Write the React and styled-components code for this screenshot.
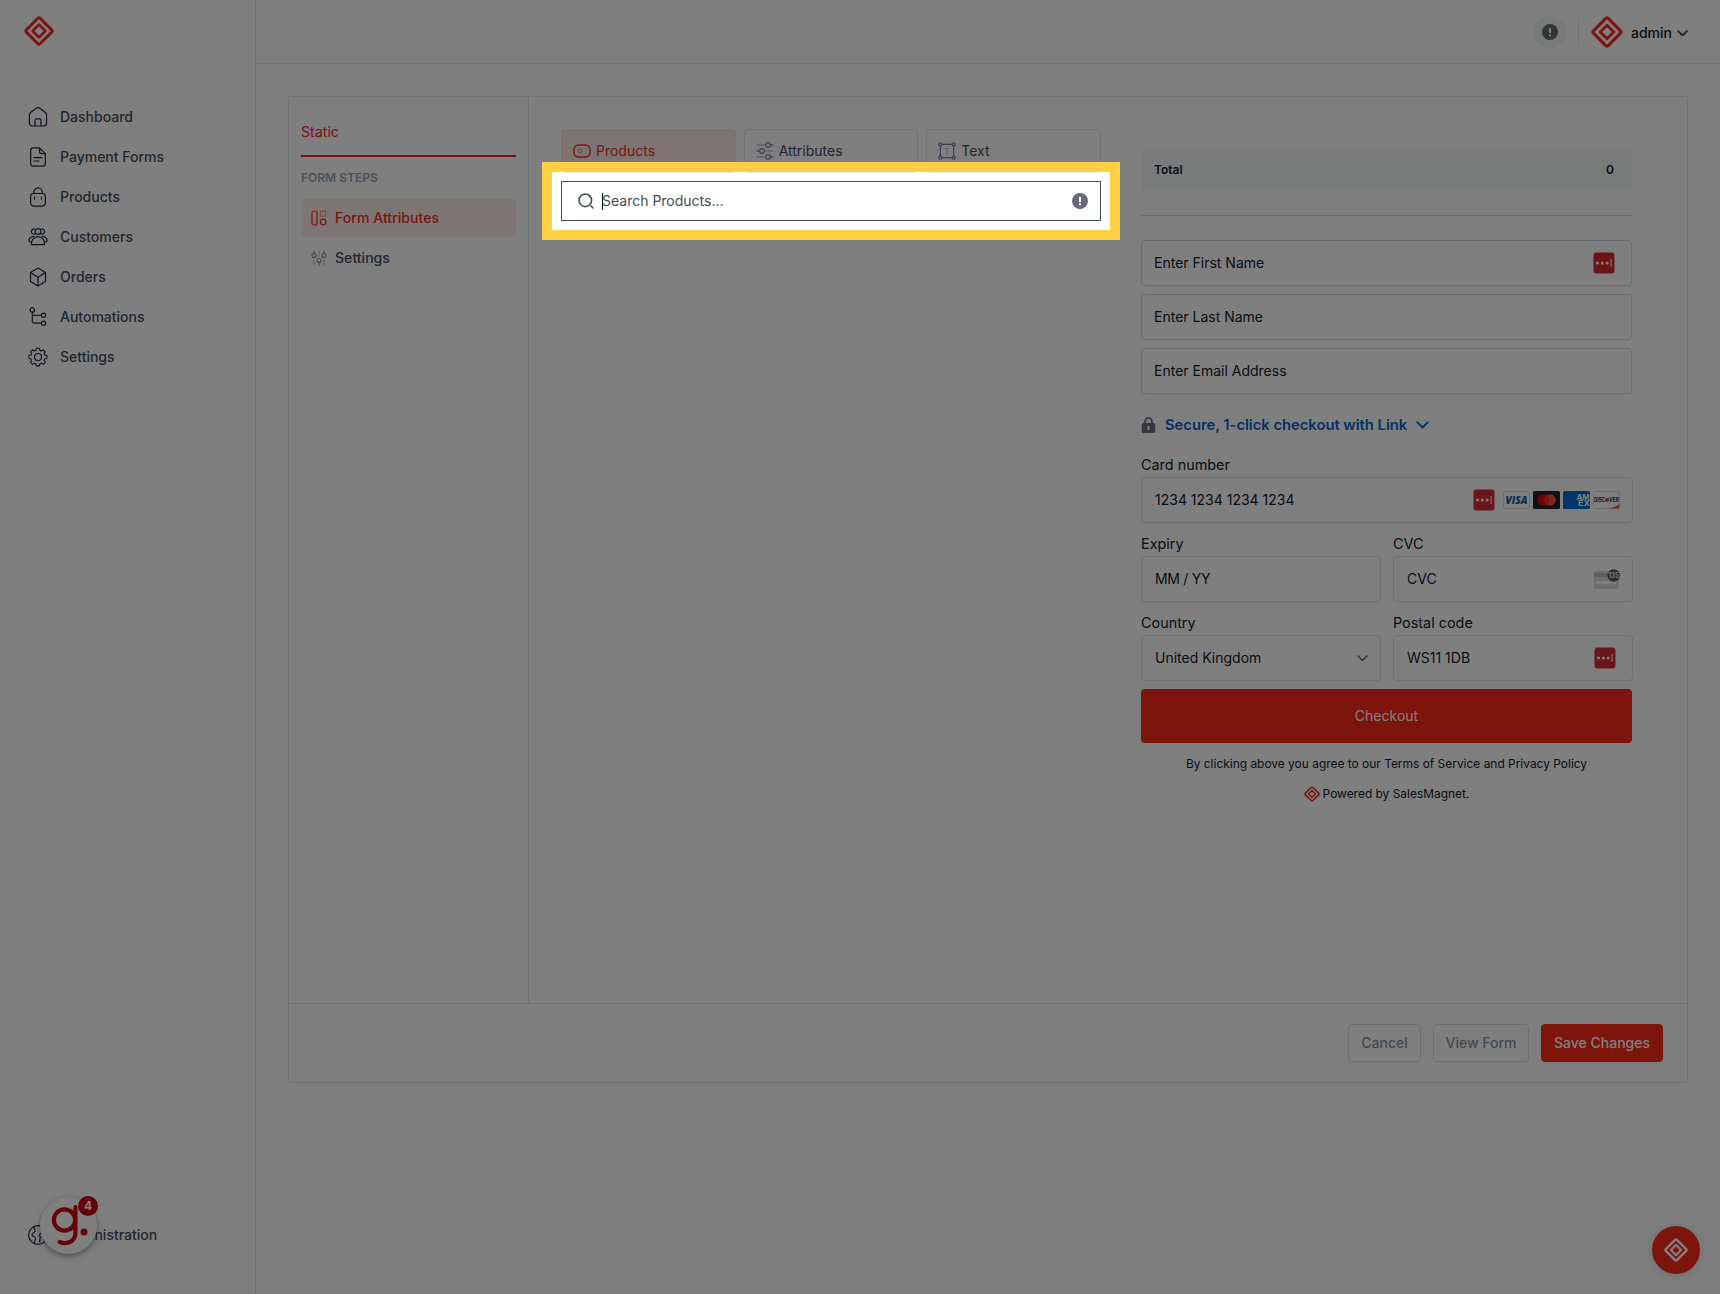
import React from 'react';
import styled, { createGlobalStyle } from 'styled-components';

const GlobalStyle = createGlobalStyle`
    *, *::before, *::after{
        box-sizing: border-box;
    }
    body{
        margin: 0;
        background: #fff;
        color: #131b2b;
        font-family: Inter, "Liberation Sans", sans-serif;
        font-size: 14px;
        line-height: 20px;
        overflow: hidden;
    }
`;

/* Page shell */
const Page = styled.div`
    position: relative;
    display: flex;
    width: 1720px;
    height: 1294px;
    overflow: hidden;
`;

const Sidebar = styled.aside`
    display: flex;
    flex-direction: column;
    flex: none;
    width: 256px;
    padding: 16px 24px 39px;
    border-right: 1px solid #e2e4e8;
`;

const Nav = styled.nav`
    display: flex;
    flex-direction: column;
    flex: 1;
    margin-top: 51px;
`;

const NavItem = styled.a`
    display: flex;
    align-items: center;
    gap: 12px;
    height: 40px;
    padding-left: 4px;
    margin-top: ${props => (props.$last ? 'auto' : '0')};
    color: #434e5f;
    font-weight: 500;

    svg{
        color: #1e293b;
    }
`;

const Main = styled.main`
    display: flex;
    flex-direction: column;
    flex: 1;
`;

const Header = styled.header`
    display: flex;
    align-items: center;
    justify-content: flex-end;
    height: 64px;
    padding-right: 32px;
    border-bottom: 1px solid #e2e4e8;
`;

const InfoButton = styled.div`
    display: flex;
    align-items: center;
    justify-content: center;
    width: 32px;
    height: 32px;
    border-radius: 50%;
    background: #f3f6f7;
`;

const Separator = styled.div`
    width: 1px;
    height: 24px;
    margin: 0 12px;
    background: #e2e8f0;
`;

const User = styled.div`
    display: flex;
    align-items: center;
    font-weight: 500;

    span{
        margin: 2px 5px 0 8px;
    }
    svg:last-child{
        margin-top: 3px;
        color: #475569;
    }
`;

/* Form builder */
const Card = styled.section`
    display: flex;
    flex-direction: column;
    width: 1400px;
    height: 987px;
    margin: 32px;
    border: 1px solid #e2e5ea;
    border-radius: 2px;
`;

const CardBody = styled.div`
    display: flex;
    flex: 1;
`;

const Steps = styled.div`
    flex: none;
    width: 240px;
    padding: 25px 12px 0;
    border-right: 1px solid #dfe3ea;
`;

const StaticTab = styled.div`
    height: 35px;
    color: #f72c1c;
    border-bottom: 2px solid #f72c1c;
    font-size: 14.2px;
`;

const StepsTitle = styled.div`
    margin: 11px 0 11px;
    color: #94a3b8;
    font-size: 12px;
    font-weight: 600;
`;

const Step = styled.div`
    display: flex;
    align-items: center;
    gap: 8px;
    height: 38px;
    margin-bottom: 2px;
    padding-left: 10px;
    border-radius: 4px;
    font-weight: 500;
    font-size: 14.1px;
    color: ${props => (props.$active ? '#f72c1c' : '#434e5f')};
    background: ${props => (props.$active ? '#faeceb' : 'transparent')};
`;

const Fields = styled.div`
    flex: none;
    width: 580px;
    padding: 32px 8px 0 32px;
`;

const Tabs = styled.div`
    display: grid;
    grid-template-columns: repeat(3, 1fr);
    gap: 8px;
`;

const Tab = styled.div`
    display: flex;
    align-items: center;
    gap: 5px;
    height: 44px;
    padding-left: 11px;
    border: 1px solid #e2e8f0;
    border-radius: 4px;
    color: ${props => (props.$active ? '#f72c1c' : '#434e5f')};
    background: ${props => (props.$active ? '#fae8e7' : 'transparent')};
`;

const Search = styled.div`
    display: flex;
    align-items: center;
    height: 40px;
    margin-top: 8px;
    padding: 0 12px 0 16px;
    border: 1px solid #414a57;
    color: #434c59;
`;

const Caret = styled.i`
    width: 1px;
    height: 17px;
    margin-left: 8px;
    background: #000;
`;

const Placeholder = styled.span`
    flex: 1;
    margin-left: -1px;
`;

/* Checkout preview */
const Preview = styled.div`
    flex: 1;
    min-width: 0;
    padding: 52px 55px 0 32px;
`;

const Total = styled.div`
    display: flex;
    align-items: center;
    justify-content: space-between;
    height: 42px;
    padding: 0 18px 0 13px;
    border-radius: 4px;
    background: #f4f7f6;
    font-size: 12px;
    font-weight: 600;
`;

const Rule = styled.div`
    height: 1px;
    margin: 24px 0;
    background: #dcdfe3;
`;

const Input = styled.div`
    display: flex;
    align-items: center;
    height: 46px;
    margin-bottom: ${props => (props.$stripe ? '0' : '8px')};
    padding: ${props => (props.$stripe ? '0 12px 0 13px' : '0 16px 0 12px')};
    border: 1px solid ${props => (props.$stripe ? '#e2e2e2' : '#d6dee6')};
    border-radius: 4px;
    box-shadow: 0 1px 2px rgba(0, 0, 0, 0.04);

    span{
        flex: 1;
        letter-spacing: ${props => (props.$tight ? '-0.3px' : 'normal')};
    }
`;

const LinkRow = styled.div`
    display: flex;
    align-items: center;
    height: 22px;
    margin: 20px 0 19px;
    color: #0b62c8;
    font-size: 14.75px;
    font-weight: 600;

    span{
        margin: 0 9px;
    }
`;

const Stripe = styled.div`
    display: grid;
    grid-template-columns: 240px 240px;
    gap: 11px 12px;
    width: 492px;
`;

const Field = styled.div`
    grid-column: ${props => (props.$wide ? 'span 2' : 'auto')};
`;

const Label = styled.div`
    height: 20px;
    margin-bottom: 2px;
    font-size: 14.4px;
`;

const Brands = styled.div`
    display: flex;
    gap: 3px;
    margin-left: 8px;
`;

const Checkout = styled.div`
    display: flex;
    align-items: center;
    justify-content: center;
    height: 54px;
    margin-top: 8px;
    border-radius: 4px;
    background: #fb2b1a;
    color: #fff;
`;

const Note = styled.div`
    display: flex;
    align-items: center;
    justify-content: center;
    gap: 3px;
    margin-top: ${props => props.$top}px;
    font-size: 11.95px;
    white-space: nowrap;
`;

const CardFooter = styled.div`
    display: flex;
    align-items: center;
    justify-content: flex-end;
    gap: 12px;
    height: 79px;
    padding-right: 24px;
    border-top: 1px solid #e2e5ea;
`;

const Button = styled.button`
    width: ${props => props.$width}px;
    height: 38px;
    padding: 0;
    border: 1px solid ${props => (props.$primary ? '#fb2b1a' : '#dbe2ea')};
    border-radius: 4px;
    background: ${props => (props.$primary ? '#fb2b1a' : '#fff')};
    color: ${props => (props.$primary ? '#fff' : '#8494aa')};
    box-shadow: 0 1px 2px rgba(0, 0, 0, 0.05);
    font: 500 14px/20px Inter, "Liberation Sans", sans-serif;
`;

/* Floating pieces */
const ChatButton = styled.div`
    position: absolute;
    right: 20px;
    bottom: 20px;
    display: flex;
    align-items: center;
    justify-content: center;
    width: 48px;
    height: 48px;
    border-radius: 50%;
    background: #fb2b1a;
    color: #fff;
    box-shadow: 0 1px 6px rgba(0, 0, 0, 0.06), 0 2px 32px rgba(0, 0, 0, 0.12);
`;

const Guide = styled.div`
    position: absolute;
    left: 40px;
    top: 1197px;
    width: 57px;
    height: 57px;
    border-radius: 50%;
    background: #fff;
    box-shadow: 0 2px 4px rgba(40, 50, 70, 0.4), 0 3px 12px rgba(0, 0, 0, 0.12);
`;

const GuideCount = styled.div`
    position: absolute;
    left: 38px;
    top: -1px;
    width: 20px;
    height: 20px;
    border-radius: 50%;
    background: #cc0612;
    color: #fff;
    font-size: 12px;
    font-weight: 700;
    text-align: center;
`;

/* Everything outside the frame is dimmed by its shadow */
const Spotlight = styled.div`
    position: absolute;
    left: 542px;
    top: 162px;
    width: 578px;
    height: 78px;
    border: 10px solid #ffd042;
    box-shadow: 0 0 0 2000px rgba(0, 0, 0, 0.5);
`;

const Icon = ({ size = 20, box = 20, width = 1.2, children }) => (
    <svg width={size} height={size} viewBox={`0 0 ${box} ${box}`} fill="none" stroke="currentColor"
        strokeWidth={width} strokeLinecap="round" strokeLinejoin="round" style={{ flex: 'none' }}>
        {children}
    </svg>
);

const Logo = ({ size, color = '#f72c1c' }) => (
    <svg width={size} height={size} viewBox="0 0 30 30" fill="none" stroke={color} strokeLinejoin="round" style={{ flex: 'none' }}>
        <path d="M13.9 2.3 2.3 13.9a1.5 1.5 0 0 0 0 2.2l11.6 11.6a1.5 1.5 0 0 0 2.2 0l11.6-11.6a1.5 1.5 0 0 0 0-2.2L16.1 2.3a1.5 1.5 0 0 0-2.2 0z" strokeWidth="3" />
        <path d="M15 8.6 8.6 15l6.4 6.4 6.4-6.4z" strokeWidth="2.7" />
    </svg>
);

const Alert = () => (
    <svg width="16" height="16" viewBox="0 0 16 16">
        <circle cx="8" cy="8" r="8" fill="#646b76" />
        <path d="M7 4h2v5H7zM7 10.3h2v1.9H7z" fill="#fff" />
    </svg>
);

const Chevron = ({ size = 10, width = 1.8, color = 'currentColor' }) => (
    <svg width={size} height={size * 0.6} viewBox="0 0 10 6" fill="none" stroke={color}
        strokeWidth={width} strokeLinecap="round" strokeLinejoin="round">
        <path d="M1 1l4 4 4-4" />
    </svg>
);

const Password = () => (
    <svg width="22" height="22" viewBox="0 0 22 22">
        <rect x=".5" y=".5" width="21" height="21" rx="3" fill="#d92b32" />
        <g fill="#fff">
            <circle cx="4.5" cy="11" r="1.5" />
            <circle cx="9.3" cy="11" r="1.5" />
            <circle cx="14.1" cy="11" r="1.5" />
            <rect x="17.6" y="7" width="1" height="8" />
        </g>
    </svg>
);

const nav = [
    ['Dashboard', <path key="a" d="M1.4 8.2c0-1.4.5-2.2 1.5-3l5.3-4a3 3 0 0 1 3.6 0l5.3 4c1 .8 1.5 1.6 1.5 3V16a3 3 0 0 1-3 3H4.4a3 3 0 0 1-3-3zM7 19v-5.4a1.7 1.7 0 0 1 1.7-1.7h2.6a1.7 1.7 0 0 1 1.7 1.7V19" />],
    ['Payment Forms', <path key="b" d="M11.5.8H5A2.3 2.3 0 0 0 2.7 3v14A2.3 2.3 0 0 0 5 19.2h10a2.3 2.3 0 0 0 2.3-2.2V6.6zM11.5.8v3.800a2 2 0 0 0 2 2h3.8M6 10.7h8M6 14h5" />],
    ['Products', <path key="c" d="M5.2 6.5h9.6a2.5 2.5 0 0 1 2.5 2.5v7a3.2 3.2 0 0 1-3.2 3.2H5.9A3.2 3.2 0 0 1 2.7 16V9a2.5 2.5 0 0 1 2.5-2.5zM5.5 6.500c0-7.5 9-7.5 9 0M6.500 10v2M13.500 10v2" />],
    ['Customers', <g key="d"><circle cx="10" cy="4.5" r="2.9" /><path d="M7 2.200a2.6 2.6 0 1 0 .3 4.600M13 2.200a2.6 2.6 0 1 1-.3 4.600M3.400 17.600c0-4.5 2.5-8 6.600-8s6.600 3.500 6.600 8zM6 9.300c-3 .2-5 2-5 4.200 0 1 .8 1.600 2.200 1.600M14 9.300c3 .2 5 2 5 4.200 0 1-.8 1.600-2.200 1.600" /></g>],
    ['Orders', <path key="e" d="M10 1l7.5 4.5v9L10 19l-7.5-4.5v-9zM2.5 5.5L10 10.3l7.5-4.800M10 10.300V19" />],
    ['Automations', <g key="f"><circle cx="4.3" cy="2.9" r="2.2" /><circle cx="15.5" cy="8.3" r="2.1" /><circle cx="15.5" cy="16.2" r="2.1" /><path d="M4.3 5.2v9a2 2 0 0 0 2 2h7M4.300 8.300h9" /></g>],
    ['Settings', <g key="g"><circle cx="10" cy="10" r="3.5" /><path d="M8.3 1h3.4l.6 2.500 1.400.6 2.200-1.400 2.400 2.400-1.400 2.200.6 1.400 2.500.6v3.400l-2.500.6-.6 1.400 1.400 2.200-2.400 2.400-2.200-1.400-1.400.6-.6 2.500H8.300l-.6-2.500-1.400-.6-2.200 1.400-2.400-2.400 1.400-2.200-.6-1.400L0 12.700V9.300l2.500-.6.6-1.400-1.400-2.200 2.400-2.400 2.200 1.400 1.400-.6z" transform="translate(.9 .4) scale(.9 .88)" /></g>],
];

const Globe = () => (
    <Icon>
        <circle cx="10" cy="10" r="9.4" />
        <path d="M6 1.700c-1 2 2 2.500 1 4.500S3.500 8 4 10s3.500 1 3.500 3.500S6 16.500 6.500 18.700M18.500 7c-2-1-3.500.5-5 1s-3 2-1.500 3.500-1.500 3 0 5.500" />
    </Icon>
);

const BrandIcons = () => (
    <Brands>
        <svg width="27" height="18" viewBox="0 0 27 18">
            <rect x=".5" y=".5" width="26" height="17" rx="1.5" fill="#fff" stroke="#dcdcdc" />
            <text x="13.5" y="13" textAnchor="middle" fontFamily="Open Sans" fontStyle="italic" fontWeight="800" fontSize="10" textLength="22" lengthAdjust="spacingAndGlyphs" fill="#1457b0">VISA</text>
        </svg>
        <svg width="27" height="18" viewBox="0 0 27 18">
            <rect width="27" height="18" rx="1.5" fill="#252525" />
            <circle cx="10.5" cy="9" r="5.8" fill="#eb001b" />
            <circle cx="17" cy="9" r="5.8" fill="#f05045" />
            <path d="M13.7 4.2a5.8 5.8 0 0 1 0 9.6 5.8 5.8 0 0 1 0-9.6z" fill="#ee2a20" />
        </svg>
        <svg width="27" height="18" viewBox="0 0 27 18">
            <rect width="27" height="18" rx="1.5" fill="#016fd0" />
            <g fill="#fff" fontFamily="Inter" fontWeight="700" fontSize="8">
                <text x="13.5" y="8.6" textLength="13" lengthAdjust="spacingAndGlyphs">AM</text>
                <text x="15" y="15.2" textLength="12" lengthAdjust="spacingAndGlyphs">EX</text>
            </g>
        </svg>
        <svg width="27" height="18" viewBox="0 0 27 18">
            <rect x=".5" y=".5" width="26" height="17" rx="1.5" fill="#fff" stroke="#dcdcdc" />
            <path d="M26.5 13v3.5a1 1 0 0 1-1 1H14c5-.6 9-2 12.5-4.5z" fill="#ed5248" />
            <g fontFamily="Inter" fontWeight="700" fontSize="5.6" fill="#30343c">
                <text x="1" y="11" textLength="11" lengthAdjust="spacingAndGlyphs">DISC</text>
                <text x="16" y="11" textLength="10" lengthAdjust="spacingAndGlyphs">VER</text>
            </g>
            <circle cx="14" cy="9" r="2" fill="#e8412f" />
        </svg>
    </Brands>
);

const CvcIcon = () => (
    <svg width="27" height="22" viewBox="0 0 27 22">
        <rect x="1" y="3" width="25" height="18" rx="2" fill="#dcdcdc" />
        <path d="M1 5h25v4H1z" fill="#b4bac3" />
        <path d="M3 13h20v3H3z" fill="#fff" />
        <circle cx="20.7" cy="7.5" r="6.2" fill="#545b67" />
        <text x="20.7" y="10.2" textAnchor="middle" fontFamily="Inter" fontWeight="600" fontSize="7.5" textLength="10.5" lengthAdjust="spacingAndGlyphs" fill="#fff">135</text>
    </svg>
);

const StripeField = ({ label, value, wide, tight, children }) => (
    <Field $wide={wide}>
        <Label>{label}</Label>
        <Input $stripe $tight={tight}>
            <span>{value}</span>
            {children}
        </Input>
    </Field>
);

export default () => {
    return (
        <Page>
            <GlobalStyle />
            <Sidebar>
                <Logo size={30} />
                <Nav>
                    {nav.map(([name, icon]) => (
                        <NavItem key={name}>
                            <Icon>{icon}</Icon>
                            {name}
                        </NavItem>
                    ))}
                    <NavItem $last>
                        <Globe />
                        Administration
                    </NavItem>
                </Nav>
            </Sidebar>
            <Main>
                <Header>
                    <InfoButton><Alert /></InfoButton>
                    <Separator />
                    <User>
                        <Logo size={32} />
                        <span>admin</span>
                        <Chevron size={11} />
                    </User>
                </Header>
                <Card>
                    <CardBody>
                        <Steps>
                            <StaticTab>Static</StaticTab>
                            <StepsTitle>FORM STEPS</StepsTitle>
                            <Step $active>
                                <Icon size={16} box={16}>
                                    <rect x="1" y="1" width="5" height="14" rx="2" />
                                    <rect x="9.5" y="1.2" width="5" height="5" opacity=".4" />
                                    <circle cx="12.2" cy="12" r="2.8" />
                                </Icon>
                                Form Attributes
                            </Step>
                            <Step>
                                <Icon size={16} box={16} width={1.1}>
                                    <path d="M8 1v5M3 10v5M13 10v5" opacity=".35" />
                                    <g stroke="#8190a5">
                                        <circle cx="3" cy="5.5" r="2" />
                                        <circle cx="8" cy="10.5" r="2" />
                                        <circle cx="13" cy="5.5" r="2" />
                                        <path d="M3 1v2.5M13 1v2.5M8 12.5V15" />
                                    </g>
                                </Icon>
                                Settings
                            </Step>
                        </Steps>
                        <Fields>
                            <Tabs>
                                <Tab $active>
                                    <Icon size={18} box={18} width={1.4}>
                                        <rect x="1" y="3" width="16" height="12" rx="4.5" />
                                        <circle cx="7" cy="9" r="1.9" opacity=".4" />
                                    </Icon>
                                    Products
                                </Tab>
                                <Tab>
                                    <Icon size={18} box={18} width={1.3}>
                                        <path d="M1 3h7M10 9h7M1 15h7" opacity=".35" />
                                        <g stroke="#8190a5">
                                            <circle cx="12" cy="3" r="2.4" />
                                            <circle cx="6" cy="9" r="2.4" />
                                            <circle cx="12" cy="15" r="2.4" />
                                            <path d="M14.5 3H17M1 9h2.5M14.5 15H17" />
                                        </g>
                                    </Icon>
                                    Attributes
                                </Tab>
                                <Tab>
                                    <Icon size={18} box={18}>
                                        <g stroke="#75849a">
                                            <path d="M4 2.3h10M4 15.7h10M2.3 4v10M15.7 4v10" />
                                            <circle cx="2.3" cy="2.3" r="1.5" />
                                            <circle cx="15.7" cy="2.3" r="1.5" />
                                            <circle cx="2.3" cy="15.7" r="1.5" />
                                            <circle cx="15.7" cy="15.7" r="1.5" />
                                        </g>
                                        <path d="M6.5 6.5h5M9 6.5V12" opacity=".3" />
                                    </Icon>
                                    Text
                                </Tab>
                            </Tabs>
                            <Search>
                                <Icon size={16} box={16} width={1.6}>
                                    <circle cx="7.3" cy="7.3" r="6.3" />
                                    <path d="M13 13l2 2" />
                                </Icon>
                                <Caret />
                                <Placeholder>Search Products...</Placeholder>
                                <Alert />
                            </Search>
                        </Fields>
                        <Preview>
                            <Total>
                                <span>Total</span>
                                <span>0</span>
                            </Total>
                            <Rule />
                            <Input><span>Enter First Name</span><Password /></Input>
                            <Input>Enter Last Name</Input>
                            <Input>Enter Email Address</Input>
                            <LinkRow>
                                <svg width="15" height="16" viewBox="0 0 15 16">
                                    <path d="M4 7V4.5a3.5 3.5 0 0 1 7 0V7" fill="none" stroke="#6d7480" strokeWidth="1.8" />
                                    <rect x=".8" y="6" width="13.4" height="10" rx="1.5" fill="#6d7480" />
                                    <path d="M6.5 9h2v4h-2z" fill="#fff" />
                                </svg>
                                <span>Secure, 1-click checkout with Link</span>
                                <Chevron size={13} width={1.4} />
                            </LinkRow>
                            <Stripe>
                                <StripeField label="Card number" value="1234 1234 1234 1234" wide>
                                    <Password />
                                    <BrandIcons />
                                </StripeField>
                                <StripeField label="Expiry" value="MM / YY" tight />
                                <StripeField label="CVC" value="CVC"><CvcIcon /></StripeField>
                                <StripeField label="Country" value="United Kingdom">
                                    <Chevron size={11} width={1.3} color="#5d6572" />
                                </StripeField>
                                <StripeField label="Postal code" value="WS11 1DB">
                                    <Password />
                                    <i style={{ width: 4 }} />
                                </StripeField>
                            </Stripe>
                            <Checkout>Checkout</Checkout>
                            <Note $top={11}>By clicking above you agree to our Terms of Service and Privacy Policy</Note>
                            <Note $top={10}><Logo size={16} />Powered by SalesMagnet.</Note>
                        </Preview>
                    </CardBody>
                    <CardFooter>
                        <Button $width={73}>Cancel</Button>
                        <Button $width={96}>View Form</Button>
                        <Button $width={122} $primary>Save Changes</Button>
                    </CardFooter>
                </Card>
            </Main>
            <ChatButton><Logo size={24} color="#fff" /></ChatButton>
            <Guide>
                <svg width="57" height="57" viewBox="0 0 57 57" fill="none" stroke="#cc0612" strokeWidth="4.2">
                    <circle cx="24.5" cy="23" r="10.6" />
                    <path d="M35.4 10v26c0 8-7.5 12-15.8 9" strokeLinecap="round" />
                    <circle cx="44" cy="35" r="3.5" fill="#cc0612" stroke="none" />
                </svg>
                <GuideCount>4</GuideCount>
            </Guide>
            <Spotlight />
        </Page>
    );
};
